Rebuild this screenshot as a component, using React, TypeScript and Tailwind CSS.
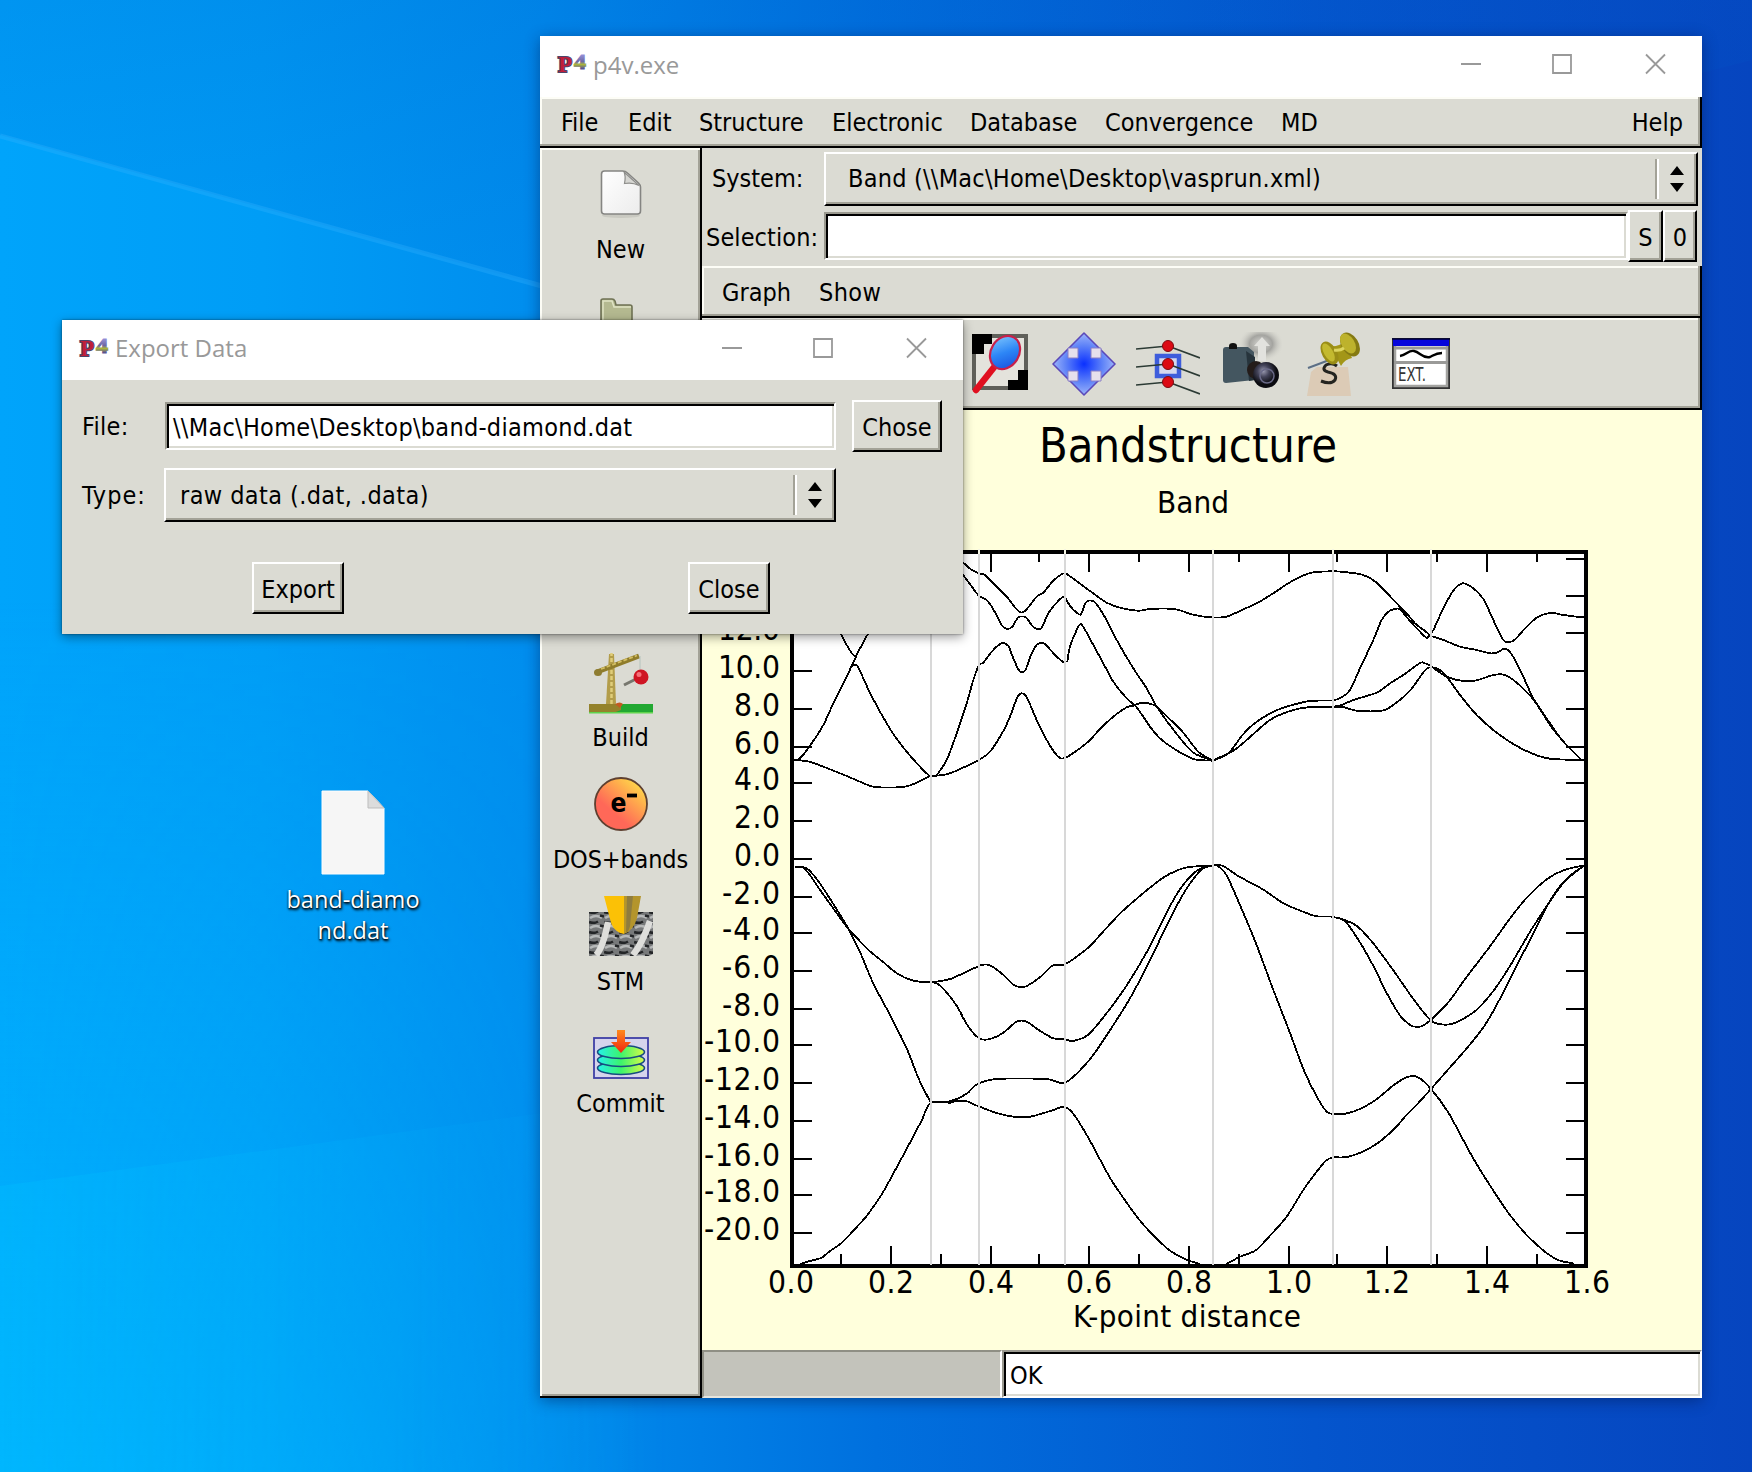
import type { ReactNode } from "react";

const UI = "font-['DejaVu_Sans_Condensed','DejaVu_Sans',sans-serif] [font-stretch:condensed]";
const SYS = "font-['Open_Sans',sans-serif] [font-stretch:normal]";
const RAISED =
  "border-2 border-t-white border-l-white border-b-black border-r-black shadow-[inset_-2px_-2px_0_#a3a297]";
const BAR =
  "border-b-2 border-r-2 border-black shadow-[inset_-2px_-2px_0_#a3a297,inset_2px_2px_0_#fdfdf6]";
const SUNKEN =
  "border-2 border-t-[#9a998f] border-l-[#9a998f] border-b-white border-r-white shadow-[inset_2px_2px_0_#000,inset_-2px_-2px_0_#dbdbd3] bg-white";

type Pt = [number, number];

const a = (pts: Pt[]): Pt[] => pts.map(([x, y]) => [780 + x / 3, 530 + y / 3]);
const b = (pts: Pt[]): Pt[] => pts.map(([x, y]) => [1180 + x / 3, 530 + y / 3]);
const c = (pts: Pt[]): Pt[] => pts.map(([x, y]) => [700 + x / 3, 830 + y / 2.703]);
const d = (pts: Pt[]): Pt[] => pts.map(([x, y]) => [1180 + x / 2.904, 830 + y / 2.703]);

const BANDS: Pt[][] = [
  a([[40, 690], [60, 691], [95, 697], [150, 718], [200, 738], [240, 755], [285, 771], [370, 771], [410, 758], [450, 738]]),
  a([[40, 690], [60, 685], [95, 640], [130, 585], [160, 520], [190, 460], [215, 408], [235, 365], [262, 315], [290, 260]]),
  a([[160, 260], [185, 315], [200, 345], [220, 375], [232, 377]]),
  a([[216, 408], [232, 408], [265, 478], [300, 545], [340, 612], [380, 665], [420, 710], [450, 738], [470, 736]]),
  a([[450, 738], [480, 736], [510, 730], [545, 715], [597, 690], [630, 665], [670, 603], [690, 560], [715, 497], [737, 497], [770, 570], [800, 630], [830, 675], [852, 685], [900, 655], [930, 630], [960, 597], [1000, 560], [1040, 532], [1060, 527], [1085, 518], [1110, 521], [1130, 530], [1165, 563], [1210, 608], [1255, 665], [1298, 692]]),
  a([[470, 736], [500, 690], [530, 610], [560, 520], [580, 450], [597, 405], [610, 398], [635, 365], [660, 342], [670, 339], [685, 348], [700, 385], [718, 422], [735, 422], [755, 370], [770, 345], [787, 338], [800, 347], [830, 380], [855, 400]]),
  a([[862, 395], [870, 350], [890, 300], [903, 282], [920, 308], [940, 345], [970, 400], [1000, 455], [1040, 505], [1070, 532], [1110, 590], [1140, 625], [1180, 655], [1240, 687], [1298, 692]]),
  a([[530, 105], [550, 135], [590, 190], [600, 200], [620, 210], [640, 238], [665, 285], [680, 297], [697, 290], [715, 262], [737, 262], [755, 285], [770, 297], [785, 293], [805, 250], [830, 218], [852, 200], [870, 228], [890, 248], [903, 253], [915, 222], [925, 212], [945, 217], [975, 262], [1010, 330], [1060, 415], [1100, 475], [1130, 530], [1190, 612], [1240, 668], [1298, 692]]),
  a([[530, 80], [550, 98], [575, 120], [597, 130], [615, 135], [635, 155], [680, 200], [715, 243], [735, 243], [770, 200], [790, 188], [820, 152], [852, 130], [870, 139], [930, 183], [980, 218], [1020, 233], [1075, 242], [1110, 237], [1170, 236], [1200, 241], [1235, 253], [1290, 262], [1340, 260], [1385, 240], [1430, 220], [1480, 190], [1530, 157], [1590, 129], [1659, 124], [1700, 127], [1750, 135], [1790, 158], [1850, 220], [1890, 262], [1905, 280], [1935, 303], [1953, 318]]),
  b([[98, 692], [145, 670], [190, 612], [230, 575], [285, 543], [330, 527], [390, 513], [459, 511], [485, 502], [510, 480], [540, 415], [580, 330], [605, 270], [625, 245], [645, 237], [660, 238], [690, 273], [735, 320], [745, 320], [760, 300], [790, 235], [820, 182], [848, 160], [880, 175], [910, 207], [940, 270], [970, 330], [1000, 332], [1040, 290], [1075, 260], [1115, 249], [1145, 254], [1190, 260], [1213, 260]]),
  b([[98, 692], [160, 662], [200, 630], [270, 570], [330, 543], [390, 531], [459, 530], [490, 531], [530, 542], [605, 542], [640, 525], [690, 482], [740, 416], [775, 417], [800, 440], [840, 495], [890, 555], [940, 600], [1000, 642], [1060, 672], [1110, 686], [1213, 691]]),
  b([[753, 318], [790, 330], [840, 350], [890, 360], [930, 370], [950, 368], [975, 356], [995, 373], [1030, 440], [1060, 505], [1110, 580], [1150, 635], [1205, 690]]),
  b([[459, 530], [485, 525], [520, 510], [590, 488], [630, 460], [670, 435], [720, 399], [735, 400], [753, 409], [800, 440], [850, 453], [890, 451], [940, 435], [975, 435], [1010, 458], [1060, 508], [1115, 592], [1155, 640], [1205, 690]]),
  c([[285, 99], [310, 102], [330, 122], [360, 162], [400, 212], [440, 262], [460, 282], [510, 328], [550, 357], [590, 387], [635, 406], [693, 411], [750, 403], [790, 387], [845, 365], [870, 366], [905, 388], [940, 418], [960, 424], [980, 422], [1020, 398], [1058, 366], [1095, 363], [1165, 318], [1210, 274], [1260, 226], [1320, 178], [1380, 135], [1410, 118], [1460, 101], [1538, 96]]),
  c([[285, 99], [320, 104], [355, 138], [395, 193], [440, 259], [480, 330], [520, 415], [570, 500], [620, 590], [655, 670], [692, 737]]),
  c([[693, 411], [720, 420], [770, 475], [800, 525], [837, 563], [870, 565], [910, 548], [950, 518], [980, 518], [1020, 543], [1060, 563], [1095, 566], [1120, 570], [1165, 553], [1220, 495], [1280, 420], [1340, 330], [1400, 223], [1440, 160], [1490, 110], [1538, 96]]),
  c([[692, 737], [750, 733], [800, 713], [830, 688], [890, 673], [1040, 673], [1095, 683], [1165, 625], [1220, 555], [1290, 455], [1350, 352], [1410, 240], [1460, 158], [1505, 107], [1538, 96]]),
  c([[300, 1173], [330, 1165], [365, 1156], [390, 1138], [425, 1116], [460, 1083], [500, 1043], [545, 985], [590, 912], [630, 845], [665, 785], [692, 737], [750, 737], [770, 732], [800, 733], [830, 745], [890, 765], [940, 775], [990, 775], [1020, 768], [1060, 757], [1092, 748], [1120, 767], [1170, 840], [1230, 940], [1290, 1020], [1340, 1077], [1400, 1130], [1440, 1153], [1470, 1165], [1500, 1173]]),
  d([[135, 1173], [175, 1153], [220, 1136], [260, 1098], [310, 1045], [360, 970], [400, 920], [425, 893], [445, 885], [490, 883], [560, 855], [620, 810], [660, 768], [690, 740], [729, 700], [765, 662], [840, 582], [885, 528], [930, 455], [970, 380], [1015, 300], [1065, 207], [1110, 145], [1172, 97]]),
  d([[95, 95], [125, 97], [170, 125], [240, 160], [300, 198], [350, 218], [395, 233], [445, 235], [510, 257], [560, 305], [620, 380], [680, 460], [729, 515], [765, 526], [800, 521], [860, 487], [910, 435], [960, 365], [1020, 270], [1085, 178], [1125, 130], [1172, 97]]),
  d([[445, 235], [480, 247], [520, 300], [560, 365], [600, 440], [640, 503], [670, 528], [688, 532], [705, 529], [729, 513], [780, 465], [830, 400], [900, 315], [960, 237], [1010, 180], [1070, 130], [1120, 107], [1172, 96]]),
  d([[95, 95], [110, 97], [135, 122], [175, 205], [220, 305], [270, 430], [320, 550], [360, 650], [400, 725], [432, 765], [490, 765], [560, 735], [620, 690], [660, 668], [690, 668], [729, 700], [780, 765], [850, 885], [910, 975], [960, 1043], [1010, 1098], [1060, 1140], [1100, 1163], [1145, 1172]]),
];

function smooth(p: Pt[]): string {
  let s = `M${p[0][0].toFixed(1)} ${p[0][1].toFixed(1)}`;
  for (let i = 0; i < p.length - 1; i++) {
    const p0 = p[i - 1] || p[i];
    const p1 = p[i];
    const p2 = p[i + 1];
    const p3 = p[i + 2] || p2;
    const k = 7;
    s += `C${(p1[0] + (p2[0] - p0[0]) / k).toFixed(1)} ${(p1[1] + (p2[1] - p0[1]) / k).toFixed(1)} ${(p2[0] - (p3[0] - p1[0]) / k).toFixed(1)} ${(p2[1] - (p3[1] - p1[1]) / k).toFixed(1)} ${p2[0].toFixed(1)} ${p2[1].toFixed(1)}`;
  }
  return s;
}

const Y_TICKS: [number, string][] = [
  [559, "16.0"], [596, "14.0"], [633, "12.0"], [671, "10.0"], [709, "8.0"], [747, "6.0"], [783, "4.0"], [821, "2.0"], [859, "0.0"],
  [897, "-2.0"], [933, "-4.0"], [971, "-6.0"], [1009, "-8.0"], [1045, "-10.0"], [1083, "-12.0"], [1121, "-14.0"],
  [1159, "-16.0"], [1195, "-18.0"], [1233, "-20.0"],
];
const X_MAJOR: [number, string][] = [
  [791, "0.0"], [891, "0.2"], [991, "0.4"], [1089, "0.6"], [1189, "0.8"], [1289, "1.0"], [1387, "1.2"], [1487, "1.4"], [1587, "1.6"],
];
const X_MINOR = [841, 941, 1039, 1139, 1239, 1337, 1437, 1537];
const K_LINES = [931, 979, 1065, 1213, 1333, 1431];

function labelWidth(t: string) {
  if (t.length === 3) return 46;
  if (t.length === 5) return 76;
  return t[0] === "-" ? 58 : 62;
}

function Chart() {
  return (
    <svg viewBox="702 410 1000 940" className={`block h-[940px] w-[1000px] ${UI}`} fill="#000">
      <rect x="702" y="410" width="1000" height="940" fill="#ffffdc" />
      <rect x="792" y="552" width="794" height="714" fill="#fff" stroke="#000" strokeWidth="4" />
      <text x="1039" y="462" fontSize="47.500" textLength="298" lengthAdjust="spacingAndGlyphs">Bandstructure</text>
      <text x="1157" y="513" fontSize="31" textLength="72" lengthAdjust="spacingAndGlyphs">Band</text>
      <text x="1073" y="1327" fontSize="31" textLength="228">K-point distance</text>
      {Y_TICKS.map(([y, t]) => (
        <g key={t}>
          <rect x="794" y={y - 1} width="18" height="2" />
          <rect x="1566" y={y - 1} width="18" height="2" />
          <text x="780" y={y + 7} fontSize="31.500" textAnchor="end" textLength={labelWidth(t)}>{t}</text>
        </g>
      ))}
      {X_MAJOR.map(([x, t], i) => (
        <g key={t}>
          {i > 0 && i < 8 && <rect x={x - 1} y="554" width="2" height="18" />}
          {i > 0 && i < 8 && <rect x={x - 1} y="1246" width="2" height="18" />}
          <text x={x} y="1293" fontSize="31.500" textAnchor="middle" textLength="46">{t}</text>
        </g>
      ))}
      {X_MINOR.map((x) => (
        <g key={x}>
          <rect x={x - 1} y="554" width="2" height="8" />
          <rect x={x - 1} y="1254" width="2" height="10" />
        </g>
      ))}
      <g fill="none" stroke="#000" strokeWidth="1.800" shapeRendering="crispEdges">
        {BANDS.map((p, i) => (
          <path key={i} d={smooth(p)} />
        ))}
      </g>
      {K_LINES.map((x) => (
        <g key={x}>
          <rect x={x - 1} y="549" width="2" height="716" fill="#d8d8d8" />
          <rect x={x - 1} y="549" width="2" height="5" fill="#f4f4e4" />
        </g>
      ))}
    </svg>
  );
}

function P4Logo() {
  return (
    <svg viewBox="0 0 32 24" className="block h-6 w-8 shrink-0 overflow-visible">
      <defs>
        <linearGradient id="four" x1="0" y1="0" x2="0" y2="1">
          <stop offset=".2" stopColor="#9a94dc" />
          <stop offset=".5" stopColor="#6c68a4" />
          <stop offset=".62" stopColor="#a9b43c" />
          <stop offset=".78" stopColor="#5a5490" />
        </linearGradient>
      </defs>
      <g className="font-['Liberation_Serif',serif]" fontWeight="700">
        <text x="2" y="20" fontSize="23" fill="#bf1e3a" stroke="#4c4468" strokeWidth="2.200" paintOrder="stroke" textLength="14" lengthAdjust="spacingAndGlyphs">P</text>
        <text x="18" y="17" fontSize="22" fill="url(#four)" stroke="url(#four)" strokeWidth="1.200" textLength="12" lengthAdjust="spacingAndGlyphs">4</text>
      </g>
    </svg>
  );
}

function TitleBar({ title, className, titleClass }: { title: string; className: string; titleClass: string }) {
  return (
    <div className={`flex w-full shrink-0 items-center bg-white text-[#999] ${className}`}>
      <P4Logo />
      <span className={`ml-[5px] text-[24px] leading-8 whitespace-pre ${SYS} ${titleClass}`}>{title}</span>
      <svg viewBox="0 0 206 22" className="ml-auto block h-[22px] w-[206px]" fill="none" stroke="#999" strokeWidth="1.800">
        <path d="M1 11h20M93 2h18v18h-18zM186 1.500l19 19M205 1.500l-19 19" />
      </svg>
    </div>
  );
}

function Spinner() {
  return (
    <div className="flex items-center">
      <div className="h-10 w-1 border-r-2 border-l-2 border-l-[#a3a297] border-r-white" />
      <svg viewBox="0 0 14 26" className="ml-[11px] block h-[26px] w-[14px]">
        <path d="M7 0l7 9H0zM7 26l7-9H0z" />
      </svg>
    </div>
  );
}

function Btn({ children, className }: { children: ReactNode; className: string }) {
  return <button className={`flex shrink-0 items-center justify-center bg-[#dbdbd3] whitespace-nowrap ${RAISED} ${className}`}>{children}</button>;
}

function SideItem({ label, children, labelClass = "" }: { label: string; children: ReactNode; labelClass?: string }) {
  return (
    <div className="flex h-[122px] w-full flex-col items-center pt-3 pl-px">
      <svg viewBox="0 0 64 64" className="block size-16 shrink-0">{children}</svg>
      <span className={`mt-2 leading-8 whitespace-nowrap ${labelClass}`}>{label}</span>
    </div>
  );
}

function Sidebar() {
  return (
    <div className="flex h-[1250px] w-[162px] shrink-0 flex-col items-center border-r-2 border-b-2 border-black pt-[2px] shadow-[inset_2px_2px_0_#fdfdf6,inset_-2px_-2px_0_#a3a297]">
      <SideItem label="New">
        <defs>
          <linearGradient id="paper" x1="0" y1="0" x2="1" y2="1">
            <stop offset="0" stopColor="#fff" />
            <stop offset="1" stopColor="#ececec" />
          </linearGradient>
        </defs>
        <ellipse cx="32" cy="53.500" rx="19" ry="2.500" fill="#c9c9c1" />
        <path d="M15 9h18q3 0 5 2l11 10q2 2 2 4v24q0 3-3 3H15q-3 0-3-3V12q0-3 3-3z" transform="translate(.5 0)" fill="url(#paper)" stroke="#858582" strokeWidth="1.600" />
        <path d="M35 10q2 4 .5 11.500 8-1.500 14.500 2z" fill="#d6d6d2" stroke="#8d8d8a" strokeWidth="1.200" />
      </SideItem>
      <div className="h-[366px] w-full shrink-0 pt-3">
        <svg viewBox="0 0 64 64" className="mx-auto block size-16">
          <path d="M12 52V17q0-2 2-2h9q2 0 3 2l1 4h14q2 0 2 2v29z" transform="translate(1 0)" fill="#b4b990" stroke="#6f7254" strokeWidth="1.600" />
          <path d="M15 52V17h9l2 6h17" fill="none" stroke="#dfe3c4" strokeWidth="1.500" />
        </svg>
      </div>
      <SideItem label="Build">
        <path d="M0 54h64v9H0z" fill="#22a832" />
        <path d="M0 54h32v6l-8 3H0z" fill="#94822c" />
        <path d="M0 62h64v1.500H0z" fill="#5fd44c" />
        <path d="M26 54q5-3 8 0l-3 4z" fill="#c45a22" />
        <path d="M17 54l3-50h5l2 50z" fill="#b39d4a" />
        <path d="M22.500 54V3" stroke="#e0cd7a" strokeWidth="2.500" strokeDasharray="4 2" />
        <path d="M8 22L50 6" stroke="#8f7c2a" strokeWidth="5" />
        <path d="M12 19L48 5.500" stroke="#d2bd62" strokeWidth="1.800" strokeDasharray="4 2" />
        <ellipse cx="9" cy="22.500" rx="4" ry="3.500" fill="#8e7c30" />
        <path d="M51 6v16" stroke="#b5c4bd" strokeWidth="1" />
        <path d="M35 35l12-6" stroke="#77776e" strokeWidth="3" />
        <circle cx="52" cy="27" r="7.500" fill="#cf1523" />
        <circle cx="50" cy="24.500" r="2.500" fill="#f6707a" />
      </SideItem>
      <SideItem label="DOS+bands" labelClass="tracking-[-0.15px]">
        <defs>
          <linearGradient id="electron" x1=".1" y1=".8" x2=".8" y2="0">
            <stop offset=".25" stopColor="#ff6858" />
            <stop offset=".7" stopColor="#ffae4c" />
            <stop offset="1" stopColor="#ffe04a" />
          </linearGradient>
        </defs>
        <circle cx="32" cy="32" r="26" fill="url(#electron)" stroke="#5e4030" strokeWidth="1.800" />
        <text x="21.500" y="40" fontSize="26" fontWeight="700" textLength="16" lengthAdjust="spacingAndGlyphs">e</text>
        <path d="M38 23.500h10" stroke="#000" strokeWidth="3.800" />
      </SideItem>
      <SideItem label="STM">
        <defs>
          <pattern id="atoms" width="15" height="10" patternUnits="userSpaceOnUse">
            <rect width="15" height="10" fill="#77797a" />
            <path d="M1 4q6-4 12 0" fill="none" stroke="#b6b8b8" strokeWidth="2.600" />
            <path d="M0 8q5 2 9-.5M11 1.500l4 1" fill="none" stroke="#232527" strokeWidth="2.600" />
          </pattern>
        </defs>
        <path d="M0 18h64v42l-4 2H0z" fill="url(#atoms)" />
        <path d="M7 61Q14 54 19 28M44 61Q53 50 61 27" fill="none" stroke="#dededb" strokeWidth="6.500" />
        <path d="M15 2h20v38l-4-1q-8-4-10-14z" fill="#fbc106" />
        <path d="M35 2h17l-4 22q-3 12-13 16z" fill="#b4952c" />
        <path d="M38 2h6l-3 30q-1 5-4 7z" fill="#8f7c3e" />
      </SideItem>
      <SideItem label="Commit">
        <defs>
          <linearGradient id="disk">
            <stop offset="0" stopColor="#25f2ea" />
            <stop offset=".5" stopColor="#3cf46c" />
            <stop offset="1" stopColor="#d8fa48" />
          </linearGradient>
          <linearGradient id="drop" x1="0" y1="0" x2="0" y2="1">
            <stop offset="0" stopColor="#ff8a1c" />
            <stop offset="1" stopColor="#f02510" />
          </linearGradient>
        </defs>
        <rect x="5" y="22" width="54" height="40" fill="#d6d4ec" stroke="#3f3fa6" strokeWidth="1.800" />
        <g fill="url(#disk)" stroke="#174c80" strokeWidth="1.600">
          <ellipse cx="32" cy="52" rx="23.500" ry="6.500" />
          <ellipse cx="32" cy="44" rx="23.500" ry="6.500" />
          <ellipse cx="32" cy="36" rx="23.500" ry="6.500" />
        </g>
        <path d="M28 14h8v12h6L32 37 22 26h6z" fill="url(#drop)" />
      </SideItem>
    </div>
  );
}

function Toolbar() {
  return (
    <div className={`flex h-[92px] items-start pt-[14px] pl-[268px] ${BAR}`}>
      <svg viewBox="0 0 64 64" className="block size-16">
        <defs>
          <linearGradient id="lens" x1="0" y1="0" x2="1" y2="1">
            <stop offset="0" stopColor="#8ad0ff" />
            <stop offset=".5" stopColor="#2d86f6" />
            <stop offset="1" stopColor="#1547d8" />
          </linearGradient>
        </defs>
        <rect x="4" y="4" width="52" height="52" fill="#e4e3dc" stroke="#60605a" strokeWidth="4" />
        <path d="M2 2h20v10h-8v10H2zM58 58H38V48h10V38h10z" fill="#000" />
        <path d="M6 58L25 34" stroke="#e01020" strokeWidth="6.500" strokeLinecap="round" />
        <ellipse cx="35" cy="20.500" rx="14" ry="17.500" transform="rotate(32 35 20.500)" fill="url(#lens)" stroke="#c8204a" strokeWidth="2.200" />
      </svg>
      <svg viewBox="0 0 64 64" className="ml-[18px] block size-16">
        <defs>
          <radialGradient id="move">
            <stop offset="0" stopColor="#0a30ff" />
            <stop offset=".6" stopColor="#5f83f8" />
            <stop offset="1" stopColor="#9db4fa" />
          </radialGradient>
        </defs>
        <path d="M32 1L63 32 32 63 1 32z" fill="url(#move)" stroke="#5a48b8" strokeWidth="1.600" strokeLinejoin="round" />
        <path d="M16 16h10v10H16zM39 16h10v10H39zM16 39h10v10H16zM39 39h10v10H39z" fill="#e6e0ec" stroke="#8a7fc6" strokeWidth="1" />
      </svg>
      <svg viewBox="0 0 64 64" className="ml-5 block size-16">
        <rect x="21" y="24" width="22" height="20" fill="#d5d8ee" stroke="#3e5ddc" strokeWidth="4.500" />
        <path d="M0 17l32-3 32 12M0 35l32-3 32 12M0 53l32-3 32 12" fill="none" stroke="#2b3a34" strokeWidth="1.700" />
        <g fill="#dc0a14" stroke="#7e0a10">
          <circle cx="32" cy="14" r="5.500" />
          <circle cx="32" cy="32" r="5.500" />
          <circle cx="32" cy="50" r="5.500" />
        </g>
      </svg>
      <svg viewBox="0 0 64 64" className="ml-[18px] block size-16">
        <defs>
          <radialGradient id="flash">
            <stop offset="0" stopColor="#d8d8d4" />
            <stop offset=".5" stopColor="#a4a4a0" />
            <stop offset="1" stopColor="#dbdbd3" stopOpacity="0" />
          </radialGradient>
          <radialGradient id="glass" cx=".4" cy=".35">
            <stop offset="0" stopColor="#9a9ab0" />
            <stop offset=".45" stopColor="#44445a" />
            <stop offset="1" stopColor="#0b0b10" />
          </radialGradient>
        </defs>
        <ellipse cx="43" cy="12" rx="23" ry="18" fill="url(#flash)" />
        <path d="M36 14l8-9 8 9h-4v15h-8V14z" fill="#e2e2de" />
        <path d="M5 18q0-3 3-3h22l6 5v28L8 51q-3 0-3-3z" fill="#445660" />
        <path d="M28 19l9 6v23l-6 1z" fill="#27343c" />
        <path d="M11 14q0-3 4-3t4 3v3h-8z" fill="#111" />
        <circle cx="38" cy="38" r="9" fill="#241c1a" />
        <circle cx="48" cy="43" r="13" fill="url(#glass)" />
        <circle cx="49" cy="44" r="7" fill="none" stroke="#6a6a88" strokeWidth="1.500" />
      </svg>
      <svg viewBox="0 0 64 64" className="ml-[22px] block size-16">
        <path d="M7 40l6-5h31l3 29H3z" fill="#dccbb6" />
        <path d="M4 36L28 27" stroke="#5c6f86" strokeWidth="2" />
        <path d="M33 34q-5-4-11-1-5 5 2 7 10 2 7 8-4 5-14 1" fill="none" stroke="#242420" strokeWidth="3" />
        <path d="M26 14q8 1 15-4l7 16q-7 1-11 8z" fill="#a39617" />
        <ellipse cx="25.500" cy="21" rx="7.500" ry="12.500" transform="rotate(-30 25.500 21)" fill="#9a8d16" />
        <ellipse cx="24.500" cy="20.500" rx="4.500" ry="10" transform="rotate(-30 24.500 20.500)" fill="#c3b92f" />
        <ellipse cx="46" cy="12.500" rx="8.500" ry="13" transform="rotate(-32 46 12.500)" fill="#857a12" />
        <ellipse cx="44" cy="11.500" rx="6.500" ry="11" transform="rotate(-32 44 11.500)" fill="#bdb22c" />
        <path d="M30 18q6 1 10-2" fill="none" stroke="#ddd560" strokeWidth="3" />
      </svg>
      <svg viewBox="0 0 64 64" className="ml-[22px] block size-16">
        <rect x="3" y="7" width="56" height="49" fill="#fff" stroke="#333" strokeWidth="2" />
        <rect x="5" y="9" width="52" height="45" fill="none" stroke="#a3a3a0" strokeWidth="2.500" />
        <rect x="3" y="7" width="56" height="7" fill="#0505dc" />
        <path d="M2 7h58" stroke="#000030" strokeWidth="1.500" />
        <path d="M4 16h54M4 30.500h54" stroke="#9a9a98" strokeWidth="3" />
        <path d="M10 24c7-1 8-6 14-5s9 8 16 6c4-2 6-4 12-4" fill="none" stroke="#000" strokeWidth="2.400" />
        <text x="8" y="49" fontSize="19" fill="#333" textLength="28" lengthAdjust="spacingAndGlyphs">EXT.</text>
      </svg>
    </div>
  );
}

const MENUS: [string, string][] = [
  ["File", "w-[67px]"],
  ["Edit", "w-[71px]"],
  ["Structure", "w-[133px]"],
  ["Electronic", "w-[138px]"],
  ["Database", "w-[135px]"],
  ["Convergence", "w-[176px]"],
  ["MD", "w-[60px]"],
];

function MainWindow() {
  return (
    <div className="absolute top-9 left-[540px] flex h-[1362px] w-[1162px] flex-col bg-[#dbdbd3] shadow-[0_3px_14px_rgba(0,20,70,0.45)]">
      <TitleBar title="p4v.exe" className="h-[61px] pr-9 pb-[5px] pl-4" titleClass="relative top-px" />
      <div className={`flex h-[51px] shrink-0 items-center pt-[3px] pr-[17px] pl-[21px] ${BAR}`}>
        {MENUS.map(([m, w]) => (
          <span key={m} className={`${w} shrink-0`}>{m}</span>
        ))}
        <span className="ml-auto">Help</span>
      </div>
      <div className="flex flex-1">
        <Sidebar />
        <div className="flex w-[1000px] shrink-0 flex-col">
          <div className="flex h-[60px] shrink-0 items-start pt-[4px] pl-[10px]">
            <span className="w-[112px] pt-[11px]">System:</span>
            <div className={`flex h-[54px] w-[874px] items-center justify-between pr-[12px] pl-[22px] ${RAISED}`}>
              <span className="tracking-[0.23px]">Band (\\Mac\Home\Desktop\vasprun.xml)</span>
              <Spinner />
            </div>
          </div>
          <div className="flex h-[58px] shrink-0 items-start pt-[2px] pl-1">
            <span className="w-[118px] pt-[12px] tracking-[0.1px]">Selection:</span>
            <div className={`mt-[2px] h-[48px] w-[804px] ${SUNKEN}`} />
            <Btn className="h-[52px] w-[35px] pt-[3px]">S</Btn>
            <Btn className="h-[52px] w-[34px] pt-[3px]">0</Btn>
          </div>
          <div className={`flex h-[52px] shrink-0 items-center pt-[3px] pl-5 ${BAR}`}>
            <span className="w-[97px]">Graph</span>
            <span className="tracking-[0.4px]">Show</span>
          </div>
          <Toolbar />
          <Chart />
          <div className="flex h-[48px] shrink-0">
            <div className="h-[48px] w-[300px] border-2 border-t-[#8f8f84] border-l-[#8f8f84] border-r-white border-b-[#e6e4dc] bg-[#c3c3bb]" />
            <div className={`flex h-[48px] w-[700px] items-center pt-[3px] pl-[6px] ${SUNKEN}`}>OK</div>
          </div>
        </div>
      </div>
    </div>
  );
}

function ExportDialog() {
  return (
    <div className="absolute top-[320px] left-[62px] flex h-[314px] w-[901px] flex-col bg-[#dbdbd3] shadow-[0_3px_10px_rgba(0,0,0,0.4),0_0_2px_rgba(0,0,0,0.5)]">
      <TitleBar title="Export Data" className="h-[60px] pr-[36px] pb-[4px] pl-4" titleClass="" />
      <div className="mt-[20px] flex items-center pl-5">
        <span className="w-[83px] pt-px tracking-[0.3px]">File:</span>
        <div className={`flex h-12 w-[671px] items-center pt-[3px] pl-[6px] tracking-[0.27px] ${SUNKEN}`}>\\Mac\Home\Desktop\band-diamond.dat</div>
        <Btn className="ml-4 h-[52px] w-[90px] pt-[3px]">Chose</Btn>
      </div>
      <div className="mt-4 flex items-center pl-5">
        <span className="w-[82px] pt-px tracking-[1px]">Type:</span>
        <div className={`flex h-[54px] w-[672px] items-center justify-between pr-[12px] pl-[14px] ${RAISED}`}>
          <span className="pt-[2px] tracking-[0.4px]">raw data (.dat, .data)</span>
          <Spinner />
        </div>
      </div>
      <div className="mt-10 flex pl-[190px]">
        <Btn className="h-[52px] w-[92px] pt-[3px]">Export</Btn>
        <Btn className="ml-[344px] h-[52px] w-[82px] pt-[3px]">Close</Btn>
      </div>
    </div>
  );
}

function Wallpaper() {
  return (
    <svg viewBox="0 0 1752 1472" preserveAspectRatio="none" className="absolute inset-0 block h-full w-full">
      <defs>
        <linearGradient id="sky">
          <stop offset="0" stopColor="#00a4fb" />
          <stop offset=".15" stopColor="#009df6" />
          <stop offset=".3" stopColor="#008eee" />
          <stop offset=".5" stopColor="#0070de" />
          <stop offset=".75" stopColor="#0455cd" />
          <stop offset="1" stopColor="#0645bf" />
        </linearGradient>
        <linearGradient id="glow" x1="0" y1="0" x2="0" y2="1">
          <stop offset="0" stopColor="#00b8ff" stopOpacity="0" />
          <stop offset="1" stopColor="#00bcff" stopOpacity=".55" />
        </linearGradient>
        <linearGradient id="fade">
          <stop offset="0" stopColor="#fff" />
          <stop offset=".38" stopColor="#000" />
        </linearGradient>
        <linearGradient id="dusk" x1="0" y1="0" x2="0" y2="1">
          <stop offset="0" stopColor="#0058c8" stopOpacity=".2" />
          <stop offset="1" stopColor="#0058c8" stopOpacity=".06" />
        </linearGradient>
        <mask id="left">
          <rect width="1752" height="1472" fill="url(#fade)" />
        </mask>
      </defs>
      <rect width="1752" height="1472" fill="url(#sky)" />
      <path d="M0 0H1752V60L700 330 0 135z" fill="url(#dusk)" />
      <rect y="600" width="1752" height="872" fill="url(#glow)" mask="url(#left)" />
      <path d="M0 1186L700 1092V1472H0z" fill="#00c8ff" opacity=".22" mask="url(#left)" />
      <path d="M0 136L560 291" stroke="#38b4ff" strokeWidth="5" opacity=".3" />
    </svg>
  );
}

export default function App() {
  return (
    <div className={`relative h-[1472px] w-[1752px] overflow-hidden text-[25px] leading-8 text-black ${UI}`}>
      <Wallpaper />
      <div className="absolute top-[790px] left-[273px] flex w-[160px] flex-col items-center">
        <svg viewBox="0 0 64 86" className="block h-[86px] w-16">
          <path d="M1 1h46l16 17v66H1z" fill="#f6f6f6" stroke="#fdfdfd" />
          <path d="M47 1v17h16z" fill="#dcdcdc" stroke="#bdbdbd" />
        </svg>
        <div className={`mt-[8px] text-center text-[23.500px] leading-[31px] text-white [text-shadow:1px_2px_3px_#000,0_1px_2px_#000] ${SYS}`}>
          band-diamo
          <br />
          nd.dat
        </div>
      </div>
      <MainWindow />
      <ExportDialog />
    </div>
  );
}
